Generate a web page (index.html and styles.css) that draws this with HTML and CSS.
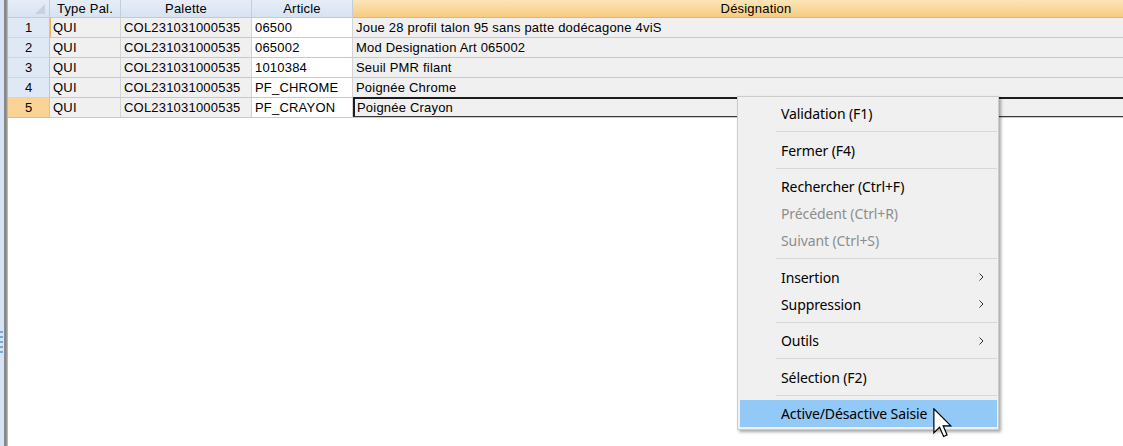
FILE: index.html
```html
<!DOCTYPE html>
<html lang="fr">
<head>
  <meta charset="UTF-8">
  <title>Saisie palettes</title>
  <link rel="stylesheet" href="styles.css">
</head>
<body>
  <div class="screen">
    <div class="splitter">
      <div class="grip"><span></span><span></span><span></span><span></span><span></span></div>
    </div>
    <div class="grid-wrap">
      <div class="grid">
        <div class="grid-row head">
          <div class="hcell corner"><span class="corner-tri"></span></div>
          <div class="hcell">Type Pal.</div>
          <div class="hcell">Palette</div>
          <div class="hcell">Article</div>
          <div class="hcell current">Désignation</div>
        </div>
        <div class="grid-row">
          <div class="rowhead">1</div>
          <div class="cell ro marked">QUI</div>
          <div class="cell ro">COL231031000535</div>
          <div class="cell">06500</div>
          <div class="cell ro">Joue 28 profil talon 95 sans patte dodécagone 4viS</div>
        </div>
        <div class="grid-row">
          <div class="rowhead">2</div>
          <div class="cell ro">QUI</div>
          <div class="cell ro">COL231031000535</div>
          <div class="cell">065002</div>
          <div class="cell ro">Mod Designation Art 065002</div>
        </div>
        <div class="grid-row">
          <div class="rowhead">3</div>
          <div class="cell ro">QUI</div>
          <div class="cell ro">COL231031000535</div>
          <div class="cell">1010384</div>
          <div class="cell ro">Seuil PMR filant</div>
        </div>
        <div class="grid-row">
          <div class="rowhead">4</div>
          <div class="cell ro">QUI</div>
          <div class="cell ro">COL231031000535</div>
          <div class="cell">PF_CHROME</div>
          <div class="cell ro">Poignée Chrome</div>
        </div>
        <div class="grid-row">
          <div class="rowhead active">5</div>
          <div class="cell ro">QUI</div>
          <div class="cell ro">COL231031000535</div>
          <div class="cell">PF_CRAYON</div>
          <div class="cell editing"><div class="editor">Poignée Crayon</div></div>
        </div>
      </div>
    </div>
  </div>

  <div class="context-menu">
    <div class="menu-item">Validation (F1)</div>
    <div class="menu-sep"></div>
    <div class="menu-item">Fermer (F4)</div>
    <div class="menu-sep"></div>
    <div class="menu-item">Rechercher (Ctrl+F)</div>
    <div class="menu-item disabled">Précédent (Ctrl+R)</div>
    <div class="menu-item disabled">Suivant (Ctrl+S)</div>
    <div class="menu-sep"></div>
    <div class="menu-item">Insertion
      <svg class="sub-arrow" width="5" height="8" viewBox="0 0 5 8"><path d="M0.5 0.5 L4 4 L0.5 7.5" fill="none" stroke="#333" stroke-width="1"/></svg>
    </div>
    <div class="menu-item">Suppression
      <svg class="sub-arrow" width="5" height="8" viewBox="0 0 5 8"><path d="M0.5 0.5 L4 4 L0.5 7.5" fill="none" stroke="#333" stroke-width="1"/></svg>
    </div>
    <div class="menu-sep"></div>
    <div class="menu-item">Outils
      <svg class="sub-arrow" width="5" height="8" viewBox="0 0 5 8"><path d="M0.5 0.5 L4 4 L0.5 7.5" fill="none" stroke="#333" stroke-width="1"/></svg>
    </div>
    <div class="menu-sep"></div>
    <div class="menu-item">Sélection (F2)</div>
    <div class="menu-sep"></div>
    <div class="menu-item hover">Active/Désactive Saisie</div>
  </div>

  <svg class="cursor" width="19" height="30" viewBox="0 0 12.5 20">
    <path d="M0.5 0.5 L0.5 16.5 L4.3 12.8 L7 19 L9.3 18 L6.7 11.9 L11.8 11.9 Z" fill="#fff" stroke="#000" stroke-width="0.8" stroke-linejoin="miter"/>
  </svg>
</body>
</html>
```

FILE: styles.css
```css
body {
  margin: 0;
  background: #fff;
  font-family: 'Liberation Sans', Arial, sans-serif;
  font-size: 13px;
  color: #000;
  overflow: hidden;
}
.screen {
  display: flex;
  height: 446px;
  width: 1123px;
}
.splitter {
  width: 8px;
  flex: none;
  background: linear-gradient(to right, #d6e4f6 0, #d6e4f6 4px, #9a9a9a 4px, #7c7c7c 5px, #8a8a8a 6px, #a8a8a8 7px, #c4c4c4 8px);
}
.grip {
  display: flex;
  flex-direction: column;
  gap: 3px;
  margin-top: 331px;
}
.grip span {
  display: block;
  width: 3px;
  height: 2px;
  background: #79a6dc;
}
.grid-wrap {
  flex: 1;
  overflow: hidden;
}
.grid-row {
  display: grid;
  grid-template-columns: 42px 71px 131px 101px 806px;
  height: 20px;
}
.grid-row.head {
  height: 18px;
}
.hcell {
  box-sizing: border-box;
  background: linear-gradient(#e6edf8, #d8e3f2);
  border-right: 1px solid #c3cedd;
  border-bottom: 1px solid #c0cbda;
  text-align: center;
  line-height: 17px;
  letter-spacing: 0.2px;
  white-space: nowrap;
  overflow: hidden;
}
.hcell.current {
  background: linear-gradient(#fce5b8, #f7cb80);
  border-bottom-color: #eeb35e;
  border-right: none;
}
.hcell.corner {
  position: relative;
}
.corner-tri {
  position: absolute;
  right: 4px;
  bottom: 3px;
  width: 0;
  height: 0;
  border-left: 10px solid transparent;
  border-bottom: 10px solid #c7d2e1;
}
.rowhead {
  box-sizing: border-box;
  background: #dfe8f5;
  border-right: 1px solid #b9c6d7;
  border-bottom: 1px solid #cbd6e5;
  text-align: center;
  line-height: 19px;
}
.rowhead.active {
  background: #fbd394;
  border-bottom-color: #f0b968;
}
.cell {
  box-sizing: border-box;
  background: #fff;
  border-right: 1px solid #d4d4d4;
  border-bottom: 1px solid #c9c9c9;
  padding-left: 3px;
  line-height: 19px;
  letter-spacing: 0.2px;
  white-space: nowrap;
  overflow: hidden;
}
.cell.ro {
  background: #f0f0f0;
}
.cell.marked {
  box-shadow: inset 1px 0 #f5b35c;
}
.cell.editing {
  padding: 0;
  overflow: visible;
  border-right: none;
}
.editor {
  box-sizing: border-box;
  height: 20px;
  margin-top: -1px;
  background: #f0f0f0;
  border-top: 2px solid #1c1c1c;
  border-left: 2px solid #1c1c1c;
  border-bottom: 1px solid #3a3a3a;
  padding-left: 2px;
  line-height: 17px;
}
.context-menu {
  position: absolute;
  left: 737px;
  top: 96px;
  width: 257px;
  padding: 3px 1px 2px 2px;
  background: #f0f0f0;
  border: 1px solid #cccccc;
  box-shadow: 2px 2px 3px rgba(0, 0, 0, 0.35);
  font-family: 'Noto Sans', 'Open Sans', sans-serif;
  font-size: 14px;
  letter-spacing: -0.1px;
}
.menu-item {
  height: 27px;
  line-height: 27px;
  padding-left: 41px;
  padding-right: 13px;
  display: flex;
  align-items: center;
  justify-content: space-between;
  white-space: nowrap;
}
.menu-item.disabled {
  color: #8d8d8d;
}
.menu-item.hover {
  background: #93c9f6;
}
.menu-sep {
  height: 1px;
  margin: 4px 0 4.5px 36px;
  background: #d7d7d7;
}
.sub-arrow {
  display: block;
}
.cursor {
  position: absolute;
  left: 933px;
  top: 408px;
}
```
